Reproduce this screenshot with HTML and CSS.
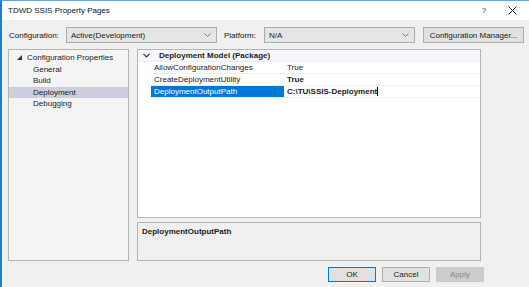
FILE: index.html
```html
<!DOCTYPE html>
<html>
<head>
<meta charset="utf-8">
<link rel="stylesheet" href="styles.css">
</head>
<body>
<div class="window">
  <div class="titlebar">
    <span class="title">TDWD SSIS Property Pages</span>
    <span class="tb-btn help">?</span>
    <span class="tb-btn close">
      <svg width="9" height="9" viewBox="0 0 9 9"><path d="M0.5 0.5 L8.5 8.5 M8.5 0.5 L0.5 8.5" stroke="#222" stroke-width="1"/></svg>
    </span>
  </div>
  <div class="toolbar">
    <span class="lbl lbl-config">Configuration:</span>
    <div class="select sel-config"><span>Active(Development)</span><svg class="chev" width="7" height="4" viewBox="0 0 7 4"><path d="M0.5 0.5 L3.5 3.5 L6.5 0.5" stroke="#777" fill="none"/></svg></div>
    <span class="lbl lbl-platform">Platform:</span>
    <div class="select sel-platform"><span>N/A</span><svg class="chev" width="7" height="4" viewBox="0 0 7 4"><path d="M0.5 0.5 L3.5 3.5 L6.5 0.5" stroke="#777" fill="none"/></svg></div>
    <div class="btn btn-cm">Configuration Manager...</div>
  </div>
  <div class="main">
    <div class="tree">
      <div class="tree-item root"><svg class="tri" width="5" height="5" viewBox="0 0 5 5"><path d="M5 0 L5 5 L0 5 Z" fill="#333"/></svg>Configuration Properties</div>
      <div class="tree-item child">General</div>
      <div class="tree-item child">Build</div>
      <div class="tree-item child selected">Deployment</div>
      <div class="tree-item child">Debugging</div>
    </div>
    <div class="right">
      <div class="grid">
        <div class="cat-row">
          <svg class="cat-chev" width="7" height="5" viewBox="0 0 7 5"><path d="M0.5 0.8 L3.5 3.8 L6.5 0.8" stroke="#333" fill="none" stroke-width="1.2"/></svg>
          <span class="cat-name">Deployment Model (Package)</span>
        </div>
        <div class="prop-row">
          <div class="pname">AllowConfigurationChanges</div>
          <div class="pval">True</div>
        </div>
        <div class="prop-row">
          <div class="pname">CreateDeploymentUtility</div>
          <div class="pval bold">True</div>
        </div>
        <div class="prop-row sel">
          <div class="pname">DeploymentOutputPath</div>
          <div class="pval bold">C:\TU\SSIS-Deployment<span class="caret"></span></div>
        </div>
      </div>
      <div class="desc">DeploymentOutputPath</div>
    </div>
  </div>
  <div class="footer">
    <div class="btn fbtn ok">OK</div>
    <div class="btn fbtn">Cancel</div>
    <div class="btn fbtn disabled">Apply</div>
  </div>
</div>
</body>
</html>
```
FILE: styles.css
```css
* { box-sizing: border-box; }
html, body { margin: 0; padding: 0; }
body {
  width: 529px;
  height: 287px;
  overflow: hidden;
  font-family: "Liberation Sans", Arial, sans-serif;
  font-size: 8px;
  color: #1a1a1a;
  background: #f0f0f0;
}
.window {
  width: 529px;
  height: 287px;
  border-left: 2px solid #1c7fd4;
  border-top: 1px solid #5aa3e6;
  background: #f0f0f0;
  display: flex;
  flex-direction: column;
}
.titlebar {
  height: 19px;
  background: #fff;
  display: flex;
  align-items: center;
  padding-left: 6px;
}
.title { flex: 1; font-size: 8px; color: #111; }
.tb-btn { width: 26px; display: flex; justify-content: center; align-items: center; color: #333; }
.help { font-size: 8px; margin-right: 2px; }
.close { margin-right: 4px; }
.toolbar {
  display: flex;
  align-items: center;
  height: 16px;
  margin-top: 7px;
  padding-left: 7px;
}
.lbl { color: #111; }
.lbl-config { width: 57px; }
.lbl-platform { width: 40px; margin-left: 7px; }
.select {
  height: 16px;
  border: 1px solid #adadad;
  background: #e5e5e5;
  display: flex;
  align-items: center;
  justify-content: space-between;
  padding: 0 5px 0 4px;
}
.sel-config { width: 151px; }
.sel-platform { width: 151px; }
.btn {
  border: 1px solid #adadad;
  background: #e1e1e1;
  display: flex;
  align-items: center;
  justify-content: center;
  height: 16px;
}
.btn-cm { width: 101px; margin-left: 8px; }
.main {
  display: flex;
  gap: 8px;
  padding: 0 0 0 6px;
  margin-top: 6px;
  height: 212px;
}
.tree {
  width: 121px;
  border: 1px solid #b4b4b4;
  background: #f4f4f4;
  padding-top: 2px;
}
.tree-item { height: 11.5px; line-height: 11.5px; white-space: nowrap; }
.root { padding-left: 8px; display: flex; align-items: center; }
.tri { margin-right: 5px; }
.child { padding-left: 24px; }
.selected { background: #cccedb; }
.right { width: 344px; display: flex; flex-direction: column; gap: 4px; }
.grid {
  height: 170px;
  border: 1px solid #b4b4b4;
  background: #fff;
}
.cat-row {
  height: 12px;
  background: #f5f7fb;
  display: flex;
  align-items: center;
  border-bottom: 1px solid #eceef3;
}
.cat-chev { margin-left: 5px; margin-right: 9px; }
.cat-name { font-weight: bold; }
.prop-row {
  height: 12px;
  display: flex;
  margin-left: 13px;
  border-bottom: 1px solid #f0f0f0;
}
.pname { width: 133px; padding-left: 3px; line-height: 11px; white-space: nowrap; }
.pval { flex: 1; padding-left: 3px; line-height: 11px; white-space: nowrap; }
.bold { font-weight: bold; }
.sel .pname { background: #0078d7; color: #fff; }
.caret { display: inline-block; width: 1px; height: 9px; background: #000; vertical-align: -2px; }
.desc {
  height: 39px;
  border: 1px solid #b4b4b4;
  background: #f0f0f0;
  font-weight: bold;
  padding: 4px 0 0 4px;
}
.footer {
  display: flex;
  justify-content: flex-end;
  gap: 6px;
  padding-right: 45px;
  margin-top: 6px;
}
.fbtn { width: 48px; height: 15px; }
.ok { border-color: #0078d7; }
.disabled { background: #cccccc; border-color: #cccccc; color: #8a8a8a; }
```
